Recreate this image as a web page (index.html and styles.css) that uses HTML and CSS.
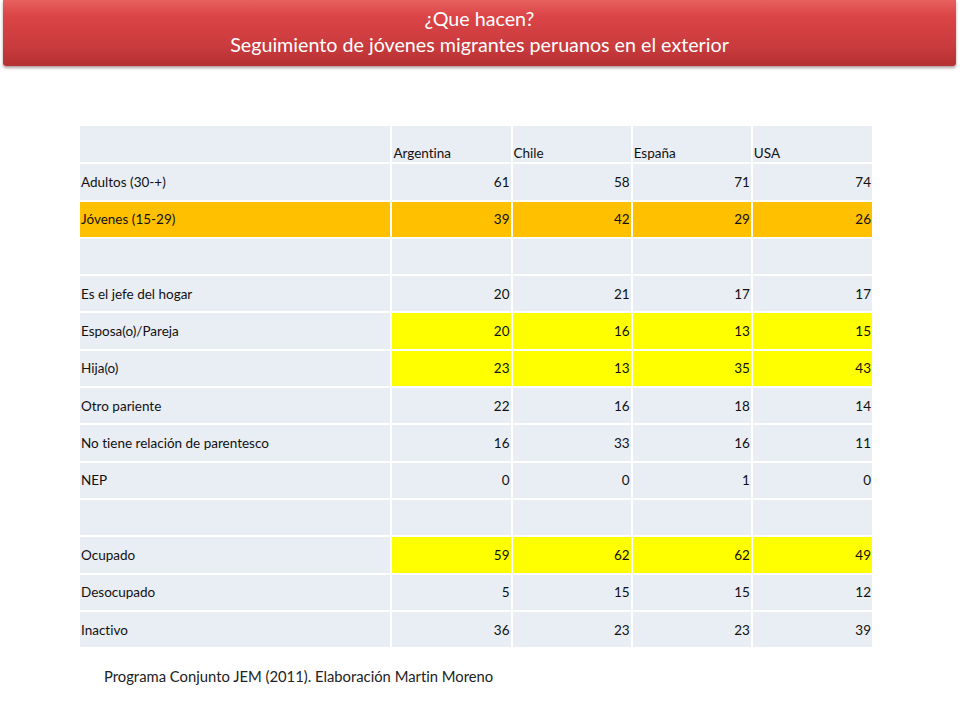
FILE: index.html
```html
<!DOCTYPE html>
<html lang="es">
<head>
<meta charset="utf-8">
<title>¿Que hacen?</title>
<link rel="stylesheet" href="styles.css">
</head>
<body>
<header class="banner">
  <div class="banner-line">¿Que hacen?</div>
  <div class="banner-line">Seguimiento de jóvenes migrantes peruanos en el exterior</div>
</header>
<main class="content">
<table class="data">
  <colgroup>
    <col class="c-label"><col class="c-num"><col class="c-num"><col class="c-num"><col class="c-num">
  </colgroup>
  <tr class="head"><td></td><td>Argentina</td><td>Chile</td><td>España</td><td>USA</td></tr>
  <tr><td>Adultos (30-+)</td><td class="n">61</td><td class="n">58</td><td class="n">71</td><td class="n">74</td></tr>
  <tr class="orange"><td>Jóvenes (15-29)</td><td class="n">39</td><td class="n">42</td><td class="n">29</td><td class="n">26</td></tr>
  <tr><td></td><td></td><td></td><td></td><td></td></tr>
  <tr><td>Es el jefe del hogar</td><td class="n">20</td><td class="n">21</td><td class="n">17</td><td class="n">17</td></tr>
  <tr><td>Esposa(o)/Pareja</td><td class="n y">20</td><td class="n y">16</td><td class="n y">13</td><td class="n y">15</td></tr>
  <tr><td>Hija(o)</td><td class="n y">23</td><td class="n y">13</td><td class="n y">35</td><td class="n y">43</td></tr>
  <tr><td>Otro pariente</td><td class="n">22</td><td class="n">16</td><td class="n">18</td><td class="n">14</td></tr>
  <tr><td>No tiene relación de parentesco</td><td class="n">16</td><td class="n">33</td><td class="n">16</td><td class="n">11</td></tr>
  <tr><td>NEP</td><td class="n">0</td><td class="n">0</td><td class="n">1</td><td class="n">0</td></tr>
  <tr><td></td><td></td><td></td><td></td><td></td></tr>
  <tr><td>Ocupado</td><td class="n y">59</td><td class="n y">62</td><td class="n y">62</td><td class="n y">49</td></tr>
  <tr><td>Desocupado</td><td class="n">5</td><td class="n">15</td><td class="n">15</td><td class="n">12</td></tr>
  <tr><td>Inactivo</td><td class="n">36</td><td class="n">23</td><td class="n">23</td><td class="n">39</td></tr>
</table>
<p class="source">Programa Conjunto JEM (2011). Elaboración Martin Moreno</p>
</main>
</body>
</html>
```

FILE: styles.css
```css
html, body {
  margin: 0;
  padding: 0;
  background: #ffffff;
}

body {
  font-family: Lato, "Open Sans", sans-serif;
  font-variant-ligatures: none;
  color: #000;
}

.banner {
  margin: 0 4px 0 3px;
  height: 66px;
  box-sizing: border-box;
  padding-top: 6px;
  background: linear-gradient(to bottom, #e8605f 0%, #db4446 25%, #c93b3e 70%, #b53131 100%);
  border-radius: 0 0 3px 3px;
  box-shadow: 0 2px 3px rgba(80, 40, 40, 0.45);
  color: #ffffff;
  text-align: center;
  font-size: 19.7px;
  line-height: 26px;
}

.content {
  padding: 60px 0 0 80px;
}

.data {
  border-collapse: collapse;
  width: 792px;
  table-layout: fixed;
  font-size: 13.5px;
  color: #111;
}

.c-label { width: 311px; }
.c-num { width: 120px; }

.data td {
  background: #e9edf4;
  border-right: 2px solid #ffffff;
  border-bottom: 2px solid #ffffff;
  height: 35.3px;
  padding: 0 1px;
  vertical-align: middle;
  white-space: nowrap;
}

.data td:last-child {
  border-right: none;
}

.data tr:last-child td {
  border-bottom: none;
}

.data .head td {
  vertical-align: bottom;
  padding-bottom: 1px;
}

.data td.n {
  text-align: right;
}

.data .orange td {
  background: #ffc000;
}

.data td.y {
  background: #ffff00;
}

.source {
  margin: 20px 0 0 24px;
  font-size: 14.8px;
  color: #222;
}
```
